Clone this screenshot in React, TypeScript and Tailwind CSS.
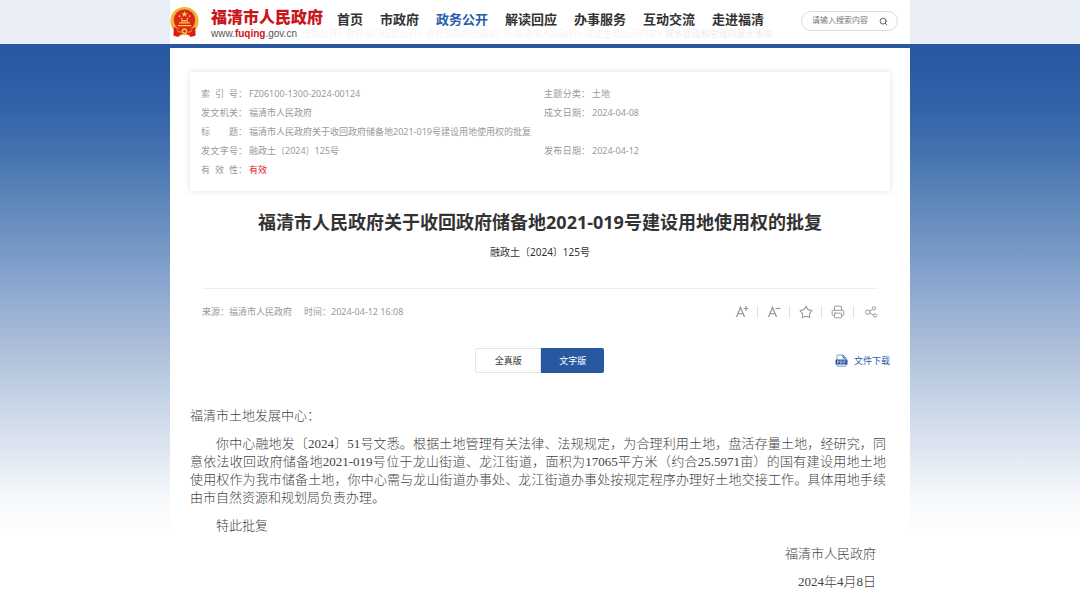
import type { ReactNode } from 'react';
import { Search, Printer } from 'lucide-react';

const navItems = ['首页', '市政府', '政务公开', '解读回应', '办事服务', '互动交流', '走进福清'];

const crumbs = ['信息公开', '政府部门信息公开', '政府及政府组成部门', '福清市人民政府', '法定主动公开内容'];

const metaRows = [
  [
    { label: '索引号', value: 'FZ06100-1300-2024-00124' },
    { label: '主题分类', value: '土地' },
  ],
  [
    { label: '发文机关', value: '福清市人民政府' },
    { label: '成文日期', value: '2024-04-08' },
  ],
  [{ label: '标题', value: '福清市人民政府关于收回政府储备地2021-019号建设用地使用权的批复' }],
  [
    { label: '发文字号', value: '融政土〔2024〕125号' },
    { label: '发布日期', value: '2024-04-12' },
  ],
  [{ label: '有效性', value: '有效', highlight: true }],
];

export default function App() {
  return (
    <div className="min-h-screen bg-white font-['Noto_Sans','Noto_Sans_CJK_SC',sans-serif] text-[#333]">
      <Header />
      <div className="bg-[linear-gradient(to_bottom,#2757a2_0px,#3361a8_55px,#4270b0_100px,#5c85b9_150px,#7699c6_202px,#93add3_252px,#aebfd9_302px,#c5d4e6_352px,#dfe6f1_402px,#f5f8fb_448px,#ffffff_488px)]">
        <main className="mx-auto min-h-[565px] w-full max-w-[740px] bg-white px-5 pt-6">
          <MetaCard />
          <Article />
        </main>
      </div>
    </div>
  );
}

function Header() {
  return (
    <header className="border-b-4 border-[#2a58a0] bg-[#e9eef6] font-['Liberation_Sans','Noto_Sans_CJK_SC',sans-serif]">
      <div className="relative mx-auto flex h-11 w-full max-w-[740px] items-center bg-white">
        <div className="absolute bottom-1 left-[132px] whitespace-nowrap text-[9px] leading-3 text-[#f4f4f4]">
          {crumbs.join('> ')}&gt; <span className="text-[#eeeeee]">城乡建设和管理的重大事项</span>
        </div>
        <a href="#" className="relative flex shrink-0 items-center gap-3">
          <Emblem />
          <span className="flex flex-col pt-[3px]">
            <span className="font-['Liberation_Serif','Noto_Sans_CJK_SC',serif] text-base font-black leading-5 text-[#c8161d]">
              福清市人民政府
            </span>
            <span className="text-[10px] leading-3 text-[#555]">
              www.<b className="text-[#c8161d]">fuqing</b>.gov.cn
            </span>
          </span>
        </a>
        <nav className="relative ml-[14px] flex gap-[17px] pb-1 text-[13px] font-bold leading-4">
          {navItems.map((item) => (
            <a key={item} href="#" className={item === '政务公开' ? 'text-[#2a5caa]' : 'text-[#333]'}>
              {item}
            </a>
          ))}
        </nav>
        <form className="relative mb-[2px] ml-auto mr-3 flex h-5 w-[97px] items-center rounded-full border border-[#ddd] bg-white pl-[10px] pr-[9px]">
          <input
            type="text"
            aria-label="搜索内容"
            placeholder="请输入搜索内容"
            className="w-full min-w-0 flex-1 bg-transparent text-[8px] outline-none placeholder:text-[#777]"
          />
          <button type="button" aria-label="搜索">
            <Search className="h-[9px] w-[9px] text-[#555]" strokeWidth={2.5} />
          </button>
        </form>
      </div>
    </header>
  );
}

function MetaCard() {
  return (
    <section className="bg-white px-[11px] py-3 text-[9px] text-[#999] shadow-[0_0_6px_rgba(0,0,0,0.12)]">
      <dl>
        {metaRows.map((row) => (
          <div key={row[0].label} className="flex h-[19px] items-center">
            {row.map((field, i) => (
              <div key={field.label} className={i === 0 && row.length > 1 ? 'flex w-[343px]' : 'flex'}>
                <dt className="flex w-12">
                  <span className="flex w-[37px] justify-between">
                    {field.label.split('').map((ch) => (
                      <span key={ch}>{ch}</span>
                    ))}
                  </span>
                  ：
                </dt>
                <dd className={'highlight' in field ? 'text-[#d9222a]' : ''}>{field.value}</dd>
              </div>
            ))}
          </div>
        ))}
      </dl>
    </section>
  );
}

function Article() {
  return (
    <article>
      <h1 className="mt-[17px] text-center text-lg font-bold leading-7">
        福清市人民政府关于收回政府储备地2021-019号建设用地使用权的批复
      </h1>
      <p className="mt-2 text-center text-[10px] leading-4">融政土〔2024〕125号</p>

      <div className="mx-3 mt-7 flex items-center justify-between border-t border-[#eee] pt-[13px]">
        <p className="text-[9px] text-[#999]">
          <span>来源：福清市人民政府</span>
          <span className="ml-3">时间：2024-04-12 16:08</span>
        </p>
        <Tools />
      </div>

      <div className="mt-[26px] grid grid-cols-3 items-center">
        <div className="col-start-2 mx-auto flex h-[25px] w-[129px] overflow-hidden rounded-xs text-[9px]">
          <button type="button" className="flex-1 rounded-l-xs border border-[#e5e5e5] bg-white">
            全真版
          </button>
          <button type="button" className="flex-1 bg-[#2858a0] text-white">
            文字版
          </button>
        </div>
        <a href="#" className="flex items-center justify-end gap-[6px] text-[9px] text-[#2a5caa]">
          <PdfIcon />
          文件下载
        </a>
      </div>

      <div className="mt-[34px] flex flex-col gap-[10px] pr-1 text-justify font-['Liberation_Serif','Noto_Sans_CJK_SC',serif] text-[13px] font-light leading-[18px] text-[#444]">
        <p>福清市土地发展中心：</p>
        <p className="indent-[26px]">
          你中心融地发〔2024〕51号文悉。根据土地管理有关法律、法规规定，为合理利用土地，盘活存量土地，经研究，同意依法收回政府储备地2021-019号位于龙山街道、龙江街道，面积为17065平方米（约合25.5971亩）的国有建设用地土地使用权作为我市储备土地，你中心需与龙山街道办事处、龙江街道办事处按规定程序办理好土地交接工作。具体用地手续由市自然资源和规划局负责办理。
        </p>
        <p className="indent-[26px]">特此批复</p>
        <p className="pr-[10px] text-right">福清市人民政府</p>
        <p className="pr-[10px] text-right">2024年4月8日</p>
      </div>
    </article>
  );
}

function Tools() {
  return (
    <div className="flex divide-x divide-[#ddd] text-[#999]">
      <ToolButton label="放大字号">
        <FontSizeIcon plus />
      </ToolButton>
      <ToolButton label="缩小字号">
        <FontSizeIcon />
      </ToolButton>
      <ToolButton label="收藏">
        <StarIcon />
      </ToolButton>
      <ToolButton label="打印">
        <Printer className="h-[14px] w-[14px]" strokeWidth={1.7} />
      </ToolButton>
      <ToolButton label="分享">
        <ShareIcon />
      </ToolButton>
    </div>
  );
}

function ToolButton({ label, children }: { label: string; children: ReactNode }) {
  return (
    <button
      type="button"
      aria-label={label}
      className="my-1 flex h-3 w-8 items-center justify-center last:w-6 last:justify-end"
    >
      {children}
    </button>
  );
}

function FontSizeIcon({ plus = false }: { plus?: boolean }) {
  return (
    <svg viewBox="0 0 14 14" className="h-[14px] w-[14px]" fill="none" stroke="currentColor">
      <path d="M1.5 12 5.5 2.5 9.5 12M3 8.7h5" strokeWidth="1.3" />
      <path d={plus ? 'M8.5 3.5h5M11 1v5' : 'M8.5 3.5h5'} strokeWidth="1.2" />
    </svg>
  );
}

function StarIcon() {
  return (
    <svg viewBox="0 0 14 14" className="h-[14px] w-[14px]" fill="none" stroke="currentColor" strokeLinejoin="round">
      <path d="M7 1.2 9 4.6l4 .9-2.6 3.1.4 4L7 11.2l-3.800 1.400.4-4L1 5.500l4-.9z" strokeWidth="1.1" />
    </svg>
  );
}

function ShareIcon() {
  return (
    <svg viewBox="0 0 14 14" className="h-[14px] w-[14px]" fill="none" stroke="currentColor">
      <circle cx="3.6" cy="7.2" r="2.2" />
      <circle cx="10" cy="3.4" r="1.6" />
      <circle cx="11" cy="10.5" r="1.6" />
      <path d="M5.5 6 8.6 4.2M5.7 8 9.5 9.8" />
    </svg>
  );
}

function PdfIcon() {
  return (
    <svg viewBox="0 0 13 13" className="h-[13px] w-[13px]" fill="none">
      <path d="M2 6V1.8Q2 1 2.8 1H8l3 3v2M2 10v1.5q0 .7.8.7h7.4q.8 0 .8-.7V10" stroke="#7f99c6" />
      <path d="M8 1v3h3" stroke="#2a5caa" />
      <rect x="0.5" y="5.5" width="12" height="5" rx=".6" fill="#2858a0" />
      <path
        d="M2.5 9.6V6.8h1q.8 0 .8.7t-.8.7h-1M5.6 6.8v2.5h.7q1 0 1-1.25t-1-1.25zM8.8 9.6V6.8h1.8M8.8 8.2h1.5"
        stroke="#dfe7f4"
        strokeWidth=".6"
      />
    </svg>
  );
}

function Emblem() {
  return (
    <svg viewBox="0 0 30 32" className="h-8 w-[29px]">
      <circle cx="15" cy="15" r="14.6" fill="#e8b83a" />
      <circle cx="15" cy="14" r="11" fill="#de2418" />
      <path d="m15 4.5.9 2.4h2.5l-2 1.5.8 2.4-2.2-1.5-2.2 1.5.8-2.4-2-1.5h2.5z" fill="#f6cf45" />
      <g fill="#f6cf45">
        <circle cx="9.8" cy="10" r=".9" />
        <circle cx="12" cy="12.4" r=".9" />
        <circle cx="18" cy="12.4" r=".9" />
        <circle cx="20.2" cy="10" r=".9" />
        <path d="M11 15.5l1-1.5h6l1 1.5zM9.5 16.3h11v1.2h-11zM8 19h14v1.5H8z" />
      </g>
      <path d="M4 21q5 3.5 11 3.5T26 21l.5 9-5 1.5-3-2h-7l-3 2-5-1.5z" fill="#d81e14" />
      <circle cx="15" cy="25.5" r="3" fill="#f0c040" />
      <circle cx="15" cy="25.5" r="1.3" fill="#de2418" />
      <path d="M7 24.5q2 2.5 4.5 2M23 24.5q-2 2.5-4.5 2M9 30.5l3-1.5h6l3 1.5" fill="none" stroke="#f0c040" />
    </svg>
  );
}
